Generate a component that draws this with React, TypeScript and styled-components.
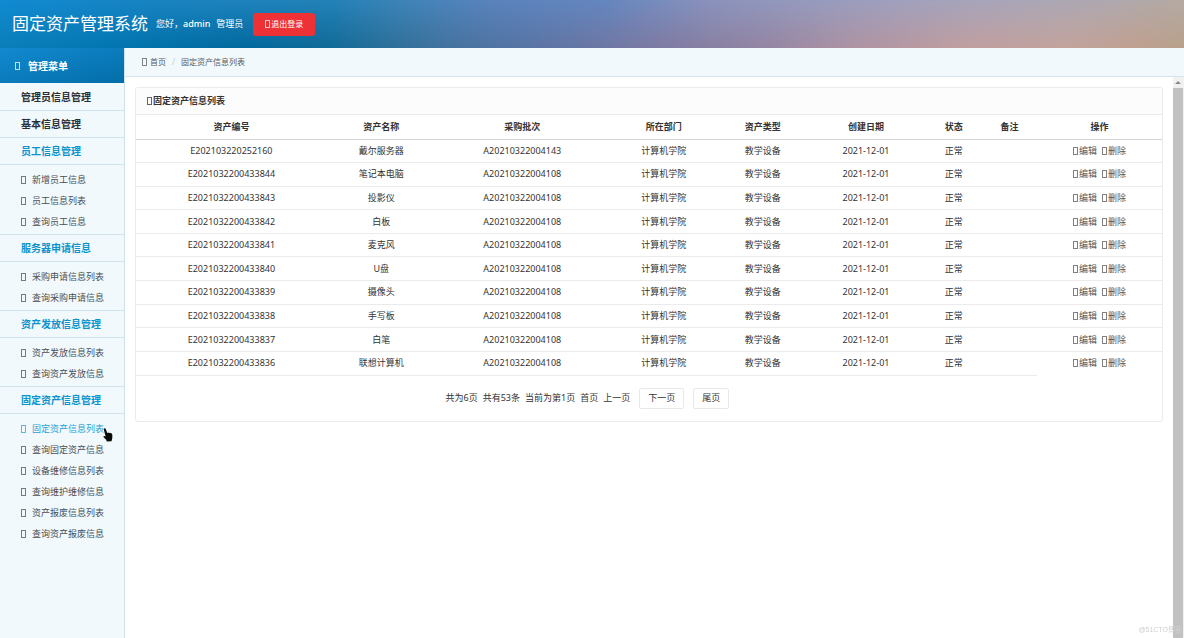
import React from 'react';
import styled, { createGlobalStyle, css } from 'styled-components';

const GlobalStyle = createGlobalStyle`
  *, *::before, *::after { box-sizing: border-box; }
  body {
    margin: 0;
    background: #fff;
    color: #333;
    font: 9px/12px "Noto Sans", "Noto Sans CJK SC", sans-serif;
  }
  button, a { font: inherit; color: inherit; text-decoration: none; }
  ul { list-style: none; margin: 0; padding: 0; }
  h1, h2, h3 { margin: 0; font-size: inherit; }
`;

const Page = styled.div`
  display: flex;
  flex-direction: column;
  min-height: 100vh;
`;

const Header = styled.header`
  position: relative;
  display: flex;
  align-items: center;
  height: 48px;
  padding: 0 12px;
  color: #fff;
  background: linear-gradient(90deg, #0a7fb9 0%, #0277b2 9%, #02699d 21%, #126b97 28%, #2c7099 33%, #45739f 38%, #5a74a5 45%, #7c7aa3 55%, #9686a3 65%, #ae93a3 72%, #c09ea0 81%, #c3a49d 90%, #c0a090 96%, #b8a08c 100%);

  &::before {
    content: "";
    position: absolute;
    inset: 0;
    background: linear-gradient(90deg, #118ad2 0%, #1983c1 13%, #2382b8 28%, #3e84b8 34%, #5b83bd 42%, #6486bf 51%, #8a92bc 60%, #959abd 68%, #a0a0bd 76%, #a8a5b9 84%, #aea8b0 93%, #b5aaa2 100%);
    mask-image: linear-gradient(180deg, #000, transparent);
  }
  & > * { position: relative; }
`;

const Brand = styled.h1`
  font-size: 17px;
  line-height: 24px;
  font-weight: 400;
`;

const Greeting = styled.p`
  display: flex;
  gap: 6px;
  margin: 0 10px 0 8px;
`;

const UserName = styled.span`
  font-weight: 500;
`;

const Logout = styled.button`
  display: flex;
  align-items: center;
  height: 23px;
  padding: 0 12px;
  border: 0;
  border-radius: 3px;
  background: #ee3135;
  font-size: 8px;
  color: #fff;
`;

const Glyph = styled.span<{ $gap?: number }>`
  display: inline-block;
  flex: none;
  width: 5px;
  height: 8px;
  margin-right: ${p => p.$gap ?? 1}px;
  border: 1px solid currentColor;
  vertical-align: -1px;
  opacity: 0.75;
`;

const Body = styled.div`
  flex: 1;
  display: flex;
`;

const Sidebar = styled.nav`
  flex: 0 0 125px;
  border-right: 1px solid #cfe3ec;
  background: #f2f9fd;
`;

const MenuTitle = styled.h2`
  display: flex;
  align-items: center;
  height: 35px;
  margin-bottom: 1px;
  padding-left: 15px;
  background: linear-gradient(165deg, #1389d1, #036ea8);
  color: #fff;
  font-size: 10px;
`;

const GroupTitle = styled.h3<{ $open: boolean }>`
  display: flex;
  align-items: center;
  height: 27px;
  padding-left: 21px;
  border-bottom: 1px solid #cfe3ec;
  font-size: 10px;
  color: ${p => (p.$open ? '#0d93cc' : '#2b2f33')};
`;

const SubMenu = styled.ul<{ $last: boolean }>`
  padding: 4px 0 2px 21px;
  border-bottom: ${p => (p.$last ? '0' : '1px solid #cfe3ec')};
`;

const SubItem = styled.li<{ $active: boolean }>`
  position: relative;
  display: flex;
  align-items: center;
  height: 21px;
  color: ${p => (p.$active ? '#2d9fd2' : '#4a4f52')};
`;

const SubLink = styled.a`
  display: flex;
  align-items: center;
  white-space: nowrap;
`;

const Pointer = styled.svg`
  position: absolute;
  left: 82px;
  top: 10px;
`;

const Main = styled.main`
  flex: 1;
  min-width: 0;
  display: flex;
  flex-direction: column;
`;

const Breadcrumb = styled.nav`
  display: flex;
  align-items: center;
  height: 29px;
  padding-left: 17px;
  border-bottom: 1px solid #d3e6ed;
  background: #f2f9fd;
  color: #555b5f;
  font-size: 8px;
`;

const Separator = styled.span`
  margin: 0 6px;
  color: #c4cbd0;
`;

const Workspace = styled.div`
  flex: 1;
  display: flex;
`;

const Content = styled.div`
  flex: 1;
  min-width: 0;
  padding: 10px;
`;

const Panel = styled.section`
  border: 1px solid #ebebeb;
  border-radius: 3px;
`;

const PanelTitle = styled.h2`
  display: flex;
  align-items: center;
  height: 27px;
  padding-left: 11px;
  background: #fcfcfc;
  border-bottom: 1px solid #ebebeb;
`;

const Table = styled.table`
  width: 100%;
  height: 306px;
  table-layout: fixed;
  border-collapse: collapse;
  text-align: center;
`;

const cell = css`
  padding: 0;
  white-space: nowrap;
`;

const HeadCell = styled.th<{ $width: string }>`
  ${cell}
  width: ${p => p.$width};
  height: 24px;
  border-bottom: 1px solid #d6d6d6;
`;

const Cell = styled.td<{ $first?: boolean }>`
  ${cell}
  border-top: ${p => (p.$first ? '0' : '1px solid #ebebeb')};
`;

const FootCell = styled.td`
  ${cell}
  height: 46px;
  border-top: 1px solid #ebebeb;
`;

const Actions = styled.span`
  display: inline-flex;
  gap: 5px;
  color: #555;
  vertical-align: top;
`;

const Pager = styled.div`
  display: flex;
  align-items: center;
  justify-content: center;
  gap: 5px;
  padding-left: 2px;
`;

const PageButton = styled.button`
  height: 21px;
  margin-left: 4px;
  padding: 0 8px;
  border: 1px solid #e8e8e8;
  border-radius: 2px;
  background: #fff;
`;

const ScrollTrack = styled.div`
  flex: 0 0 11px;
  display: flex;
  flex-direction: column;
  padding-right: 1px;
  background: #f1f1f1;
`;

const ScrollArrow = styled.svg`
  flex: none;
  align-self: center;
`;

const ScrollThumb = styled.div`
  flex: 1;
  background: #c1c1c1;
`;

const Watermark = styled.div`
  position: fixed;
  right: 2px;
  bottom: 2px;
  font: 7px/12px "Liberation Sans", "Noto Sans CJK SC", sans-serif;
  color: #cfcfcf;
`;

const groups: { title: string; items: string[] }[] = [
  { title: '管理员信息管理', items: [] },
  { title: '基本信息管理', items: [] },
  { title: '员工信息管理', items: ['新增员工信息', '员工信息列表', '查询员工信息'] },
  { title: '服务器申请信息', items: ['采购申请信息列表', '查询采购申请信息'] },
  { title: '资产发放信息管理', items: ['资产发放信息列表', '查询资产发放信息'] },
  {
    title: '固定资产信息管理',
    items: ['固定资产信息列表', '查询固定资产信息', '设备维修信息列表', '查询维护维修信息', '资产报废信息列表', '查询资产报废信息'],
  },
];

const columns: [string, string][] = [
  ['资产编号', '18.6%'],
  ['资产名称', '10.6%'],
  ['采购批次', '16.9%'],
  ['所在部门', '10.7%'],
  ['资产类型', '8.6%'],
  ['创建日期', '11.5%'],
  ['状态', '5.6%'],
  ['备注', '5.3%'],
  ['操作', '12.2%'],
];

const assets: [string, string, string][] = [
  ['E202103220252160', '戴尔服务器', 'A20210322004143'],
  ['E2021032200433844', '笔记本电脑', 'A20210322004108'],
  ['E2021032200433843', '投影仪', 'A20210322004108'],
  ['E2021032200433842', '白板', 'A20210322004108'],
  ['E2021032200433841', '麦克风', 'A20210322004108'],
  ['E2021032200433840', 'U盘', 'A20210322004108'],
  ['E2021032200433839', '摄像头', 'A20210322004108'],
  ['E2021032200433838', '手写板', 'A20210322004108'],
  ['E2021032200433837', '白笔', 'A20210322004108'],
  ['E2021032200433836', '联想计算机', 'A20210322004108'],
];

const activeItem = '固定资产信息列表';

export default function App() {
  return (
    <Page>
      <GlobalStyle />
      <Header>
        <Brand>固定资产管理系统</Brand>
        <Greeting>
          <span>您好，<UserName>admin</UserName></span>
          <span>管理员</span>
        </Greeting>
        <Logout type="button"><Glyph />退出登录</Logout>
      </Header>
      <Body>
        <Sidebar>
          <MenuTitle><Glyph $gap={8} />管理菜单</MenuTitle>
          {groups.map((group, index) => (
            <div key={group.title}>
              <GroupTitle $open={group.items.length > 0}>{group.title}</GroupTitle>
              {group.items.length > 0 && (
                <SubMenu $last={index === groups.length - 1}>
                  {group.items.map(item => (
                    <SubItem key={item} $active={item === activeItem}>
                      <SubLink href="#"><Glyph $gap={6} />{item}</SubLink>
                      {item === activeItem && (
                        <Pointer width="10" height="14" viewBox="0 0 10 14" aria-hidden="true">
                          <path d="M1.2 .5Q2.2 0 2.8 1L4.2 5 5.2 4.6 6.2 5 7.2 4.8 7.9 5.3 8.9 5.4 9.4 7.5 9.2 10.5 8.5 13.3 3.7 13.5 3.2 11.8 .6 9.2Q.2 8.2 1.2 8.1L2.6 8.6 .8 1.6Q.7 .9 1.2 .5Z" fill="#0b0b0b" />
                        </Pointer>
                      )}
                    </SubItem>
                  ))}
                </SubMenu>
              )}
            </div>
          ))}
        </Sidebar>
        <Main>
          <Breadcrumb>
            <Glyph $gap={3} />
            <a href="#">首页</a>
            <Separator>/</Separator>
            <span>固定资产信息列表</span>
          </Breadcrumb>
          <Workspace>
            <Content>
              <Panel>
                <PanelTitle><Glyph />固定资产信息列表</PanelTitle>
                <Table>
                  <thead>
                    <tr>
                      {columns.map(([name, width]) => (
                        <HeadCell key={name} $width={width} scope="col">{name}</HeadCell>
                      ))}
                    </tr>
                  </thead>
                  <tbody>
                    {assets.map(([code, name, batch], index) => {
                      const first = index === 0;
                      return (
                        <tr key={code}>
                          <Cell $first={first}>{code}</Cell>
                          <Cell $first={first}>{name}</Cell>
                          <Cell $first={first}>{batch}</Cell>
                          <Cell $first={first}>计算机学院</Cell>
                          <Cell $first={first}>教学设备</Cell>
                          <Cell $first={first}>2021-12-01</Cell>
                          <Cell $first={first}>正常</Cell>
                          <Cell $first={first} />
                          <Cell $first={first}>
                            <Actions>
                              <a href="#"><Glyph />编辑</a>
                              <a href="#"><Glyph />删除</a>
                            </Actions>
                          </Cell>
                        </tr>
                      );
                    })}
                  </tbody>
                  <tfoot>
                    <tr>
                      <FootCell colSpan={8}>
                        <Pager>
                          <span>共为6页</span>
                          <span>共有53条</span>
                          <span>当前为第1页</span>
                          <span>首页</span>
                          <span>上一页</span>
                          <PageButton type="button">下一页</PageButton>
                          <PageButton type="button">尾页</PageButton>
                        </Pager>
                      </FootCell>
                    </tr>
                  </tfoot>
                </Table>
              </Panel>
            </Content>
            <ScrollTrack>
              <ScrollArrow width="10" height="11" viewBox="0 0 10 11" aria-hidden="true">
                <path d="M5 4L8 7H2Z" fill="#8b8b8b" />
              </ScrollArrow>
              <ScrollThumb />
            </ScrollTrack>
          </Workspace>
        </Main>
      </Body>
      <Watermark>@51CTO博客</Watermark>
    </Page>
  );
}
